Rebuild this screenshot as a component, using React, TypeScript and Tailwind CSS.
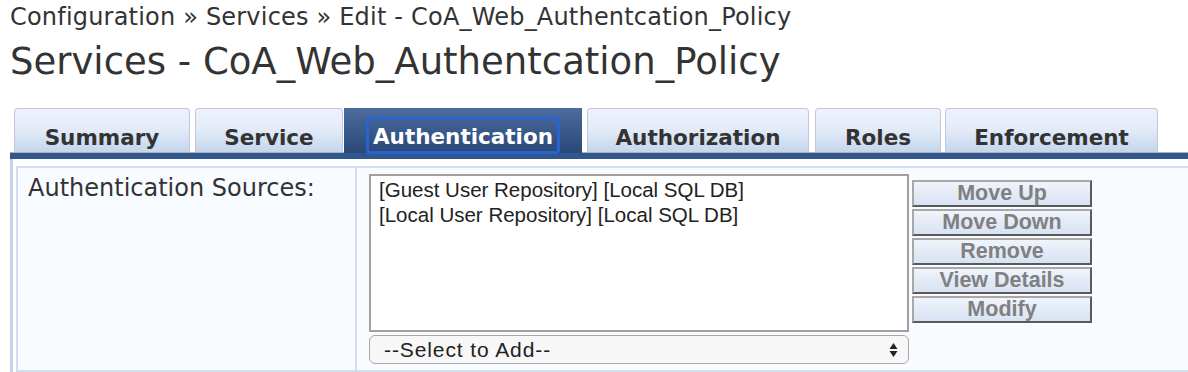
import React from "react";

const tabs = [
  { label: "Summary", w: "w-[176px]", ml: "ml-[4px]" },
  { label: "Service", w: "w-[148px]", ml: "ml-[5px]" },
  { label: "Authentication", w: "w-[238px]", ml: "ml-[1px]", active: true },
  { label: "Authorization", w: "w-[222px]", ml: "ml-[5px]" },
  { label: "Roles", w: "w-[126px]", ml: "ml-[6px]" },
  { label: "Enforcement", w: "w-[213px]", ml: "ml-[4px]" },
];

const actions = ["Move Up", "Move Down", "Remove", "View Details", "Modify"];

export default function App() {
  return (
    <div className="w-[1188px] h-[372px] overflow-hidden bg-white pl-[10px] font-['DejaVu_Sans',sans-serif] text-[#333]">
      {/* breadcrumb + title */}
      <div className="h-[36px] pt-[3px] text-[24px] leading-[28px] tracking-[0.2px] text-[#333]">
        Configuration » Services » Edit - CoA_Web_Authentcation_Policy
      </div>
      <h1 className="h-[72px] text-[37px] leading-[52px] text-[#333]">
        Services - CoA_Web_Authentcation_Policy
      </h1>

      {/* tabs */}
      <div className="flex items-end h-[45px] border-b border-[#b0b0b0]">
        {tabs.map((t) =>
          t.active ? (
            <div
              key={t.label}
              className={`${t.w} ${t.ml} h-[45px] -mb-px flex items-end justify-center bg-gradient-to-b from-[#4e6d9d] via-[#3a5a8c] to-[#2a4878]`}
            >
              <span className="mb-[-1px] px-[4px] pt-[4px] h-[37px] flex items-center border-[3px] border-[#2a62d0] rounded-[4px] text-white font-bold text-[21.5px]">
                {t.label}
              </span>
            </div>
          ) : (
            <div
              key={t.label}
              className={`${t.w} ${t.ml} h-[44px] flex items-end justify-center pb-[2px] rounded-t-[4px] border border-b-0 border-[#c3c6de] bg-gradient-to-b from-[#eef2fc] via-[#e2eaf8] to-[#c4d6ec] text-[21.5px] leading-[25px] font-bold text-[#333]`}
            >
              {t.label}
            </div>
          )
        )}
      </div>
      <div className="h-[6px] bg-[#30588f]" />

      {/* content */}
      <div className="flex h-[213px] border-l-[3px] border-[#c7d0ea] pl-[3px] pt-[7px]">
        <div className="flex flex-1 border-2 border-r-0 border-[#d3def5] bg-[#f8fbff]">
          <div className="w-[339px] border-r-2 border-[#d3def5] pl-[10px] pt-[7px] text-[24px] leading-[26px] text-[#333]">
            Authentication Sources:
          </div>
          <div className="flex pl-[12px] pt-[6px]">
            <div className="flex flex-col">
              <div className="w-[540px] h-[158px] border-2 border-[#a0a0a0] bg-white px-[8px] pt-[1px] font-['Liberation_Sans',sans-serif] text-[20.5px] leading-[25px] text-[#222]">
                <div>[Guest User Repository] [Local SQL DB]</div>
                <div>[Local User Repository] [Local SQL DB]</div>
              </div>
              <div className="mt-[3px] w-[540px] h-[29px] flex items-center justify-between rounded-[6px] border border-[#a8a8a8] bg-[#f7f7f7] pl-[14px] pr-[10px] font-['Liberation_Sans',sans-serif] text-[21px] tracking-[0.9px] text-[#222]">
                <span>--Select to Add--</span>
                <svg width="9" height="16" viewBox="0 0 9 16">
                  <path d="M4.5 1 L8.5 7 L0.5 7 Z" fill="#222" />
                  <path d="M0.5 9 L8.5 9 L4.5 15 Z" fill="#222" />
                </svg>
              </div>
            </div>
            <div className="ml-[3px] mt-[6px] flex flex-col gap-[2px]">
              {actions.map((a) => (
                <button
                  key={a}
                  className="w-[180px] h-[27px] flex items-center justify-center border-2 border-t-[#a8a8a8] border-l-[#a8a8a8] border-b-[#5a5a5a] border-r-[#5a5a5a] bg-gradient-to-b from-[#f0f4fc] to-[#d8e2f2] font-['Liberation_Sans',sans-serif] font-bold text-[21.5px] leading-none text-[#808080]"
                >
                  {a}
                </button>
              ))}
            </div>
          </div>
        </div>
      </div>
    </div>
  );
}
